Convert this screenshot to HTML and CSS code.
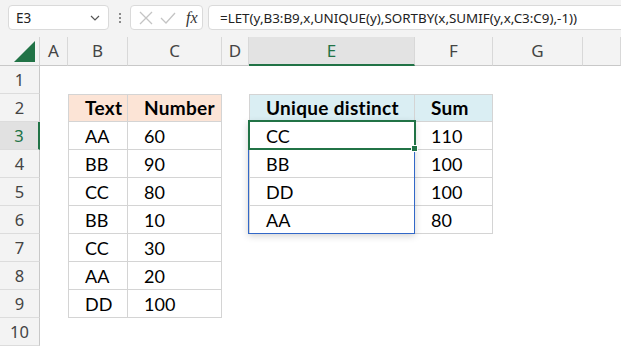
FILE: index.html
```html
<!DOCTYPE html>
<html lang="en">
<head>
  <meta charset="UTF-8">
  <title>LET UNIQUE SORTBY</title>
  <link rel="stylesheet" href="styles.css">
</head>
<body>
  <div class="fbar">
    <div class="namebox">
      <span>E3</span>
      <svg width="10" height="6" viewBox="0 0 10 6"><path d="M1 1l4 4 4-4" fill="none" stroke="#555" stroke-width="1.2"/></svg>
    </div>
    <div class="dots"><i></i><i></i><i></i></div>
    <div class="fbtns">
      <svg width="14" height="14" viewBox="0 0 14 14"><path d="M1 1l12 12M13 1L1 13" stroke="#c4c4c4" stroke-width="1.3"/></svg>
      <svg width="16" height="14" viewBox="0 0 16 14"><path d="M1 7l5 5L15 2" fill="none" stroke="#c4c4c4" stroke-width="1.3"/></svg>
      <span class="fx">fx</span>
    </div>
    <div class="formula">=LET(y,B3:B9,x,UNIQUE(y),SORTBY(x,SUMIF(y,x,C3:C9),-1))</div>
  </div>

  <div class="sheet">
    <div class="corner"><svg width="21" height="21" viewBox="0 0 21 21"><path d="M21 0V21H0z" fill="#217346"/></svg></div>
    <div class="ch">A</div><div class="ch">B</div><div class="ch">C</div><div class="ch">D</div>
    <div class="ch sel">E</div><div class="ch">F</div><div class="ch">G</div><div class="ch"></div>

    <div class="rh">1</div><div></div><div></div><div></div><div></div><div></div><div></div><div></div><div></div>

    <div class="rh">2</div><div></div>
    <div class="c th peach first">Text</div><div class="c th peach">Number</div>
    <div></div>
    <div class="c th blue first">Unique distinct</div><div class="c th blue">Sum</div>
    <div></div><div></div>

    <div class="rh sel">3</div><div></div>
    <div class="c first">AA</div><div class="c">60</div><div></div>
    <div class="c first">CC</div><div class="c">110</div><div></div><div></div>

    <div class="rh">4</div><div></div>
    <div class="c first">BB</div><div class="c">90</div><div></div>
    <div class="c first">BB</div><div class="c">100</div><div></div><div></div>

    <div class="rh">5</div><div></div>
    <div class="c first">CC</div><div class="c">80</div><div></div>
    <div class="c first">DD</div><div class="c">100</div><div></div><div></div>

    <div class="rh">6</div><div></div>
    <div class="c first">BB</div><div class="c">10</div><div></div>
    <div class="c first">AA</div><div class="c">80</div><div></div><div></div>

    <div class="rh">7</div><div></div>
    <div class="c first">CC</div><div class="c">30</div><div></div><div></div><div></div><div></div><div></div>

    <div class="rh">8</div><div></div>
    <div class="c first">AA</div><div class="c">20</div><div></div><div></div><div></div><div></div><div></div>

    <div class="rh">9</div><div></div>
    <div class="c first">DD</div><div class="c">100</div><div></div><div></div><div></div><div></div><div></div>

    <div class="rh">10</div><div></div><div></div><div></div><div></div><div></div><div></div><div></div><div></div>

    <!-- spill range E3:E6 and active cell E3 -->
    <div class="spill"></div>
    <div class="active"><b></b></div>
  </div>
</body>
</html>
```

FILE: styles.css
```css
body {
  margin: 0;
  width: 621px;
  height: 346px;
  overflow: hidden;
  background: #fff;
  font-family: "Segoe UI", "Noto Sans", sans-serif;
}

.fbar {
  height: 37px;
  background: #f3f3f3;
  display: flex;
  align-items: flex-start;
  padding: 5px 0 0 8px;
  box-sizing: border-box;
}

.namebox {
  width: 101px;
  height: 25px;
  box-sizing: border-box;
  background: #fff;
  border: 1px solid #dadada;
  border-radius: 4px;
  display: flex;
  align-items: center;
  justify-content: space-between;
  padding: 0 8px 0 7px;
  font-size: 13.5px;
  color: #222;
}

.dots {
  width: 21px;
  height: 25px;
  display: flex;
  flex-direction: column;
  align-items: center;
  justify-content: center;
  gap: 2px;
}

.dots i {
  width: 2px;
  height: 2px;
  background: #8a8a8a;
}

.fbtns {
  width: 73px;
  height: 25px;
  box-sizing: border-box;
  background: #fff;
  border: 1px solid #dadada;
  border-radius: 4px;
  display: flex;
  align-items: center;
  padding: 0 4px 0 8px;
  gap: 7px;
}

.fx {
  font-family: "Liberation Serif", serif;
  font-style: italic;
  font-size: 16px;
  color: #333;
  margin-left: 3px;
}

.formula {
  flex: 1;
  height: 25px;
  margin-left: 5px;
  margin-right: -6px;
  box-sizing: border-box;
  background: #fff;
  border: 1px solid #dadada;
  border-radius: 4px;
  padding: 3px 0 0 11px;
  font-size: 13.4px;
  color: #222;
  white-space: nowrap;
}

.sheet {
  position: relative;
  display: grid;
  grid-template-columns: 40px 28px 60px 94px 27px 166px 78px 90px 1fr;
  grid-template-rows: 29px;
  grid-auto-rows: 28px;
}

.corner,
.ch,
.rh {
  background: #f3f3f3;
  box-sizing: border-box;
  color: #444;
}

.corner {
  border-right: 1px solid #d4d4d4;
  border-bottom: 1px solid #c8c8c8;
  display: flex;
  justify-content: flex-end;
  padding: 4px 4px 0 0;
}

.ch {
  border-right: 1px solid #d8d8d8;
  border-bottom: 1px solid #c8c8c8;
  text-align: center;
  font-size: 17px;
  line-height: 27px;
}

.ch.sel {
  background: #e3e3e3;
  color: #217346;
  border-bottom: 2px solid #217346;
}

.rh {
  border-right: 1px solid #c8c8c8;
  border-bottom: 1px solid #dcdcdc;
  text-align: center;
  font-size: 16.5px;
  line-height: 28px;
}

.rh.sel {
  background: #e1e1e1;
  color: #217346;
  border-right: 2px solid #217346;
}

.c {
  box-sizing: border-box;
  border-right: 1px solid #d4d4d4;
  border-bottom: 1px solid #d4d4d4;
  padding: 3px 0 0 16px;
  font-family: Lato, "Liberation Sans", sans-serif;
  font-size: 18px;
  color: #000;
}

.c.first {
  border-left: 1px solid #d4d4d4;
}

.th {
  font-weight: bold;
  font-size: 19px;
  letter-spacing: 0.3px;
  border-top: 1px solid #d4d4d4;
  padding-top: 1px;
}

.peach {
  background: #fce4d6;
}

.blue {
  background: #daeef3;
}

.spill {
  position: absolute;
  left: 248px;
  top: 84px;
  width: 167px;
  height: 113px;
  box-sizing: border-box;
  border: 1px solid #3268c8;
  box-shadow: 0 2px 7px rgba(0, 0, 0, 0.18);
}

.active {
  position: absolute;
  left: 248px;
  top: 83px;
  width: 168px;
  height: 30px;
  box-sizing: border-box;
  border: 2px solid #217346;
}

.active b {
  position: absolute;
  right: -4px;
  bottom: -4px;
  width: 5px;
  height: 5px;
  background: #217346;
  border: 1px solid #fff;
}
```
